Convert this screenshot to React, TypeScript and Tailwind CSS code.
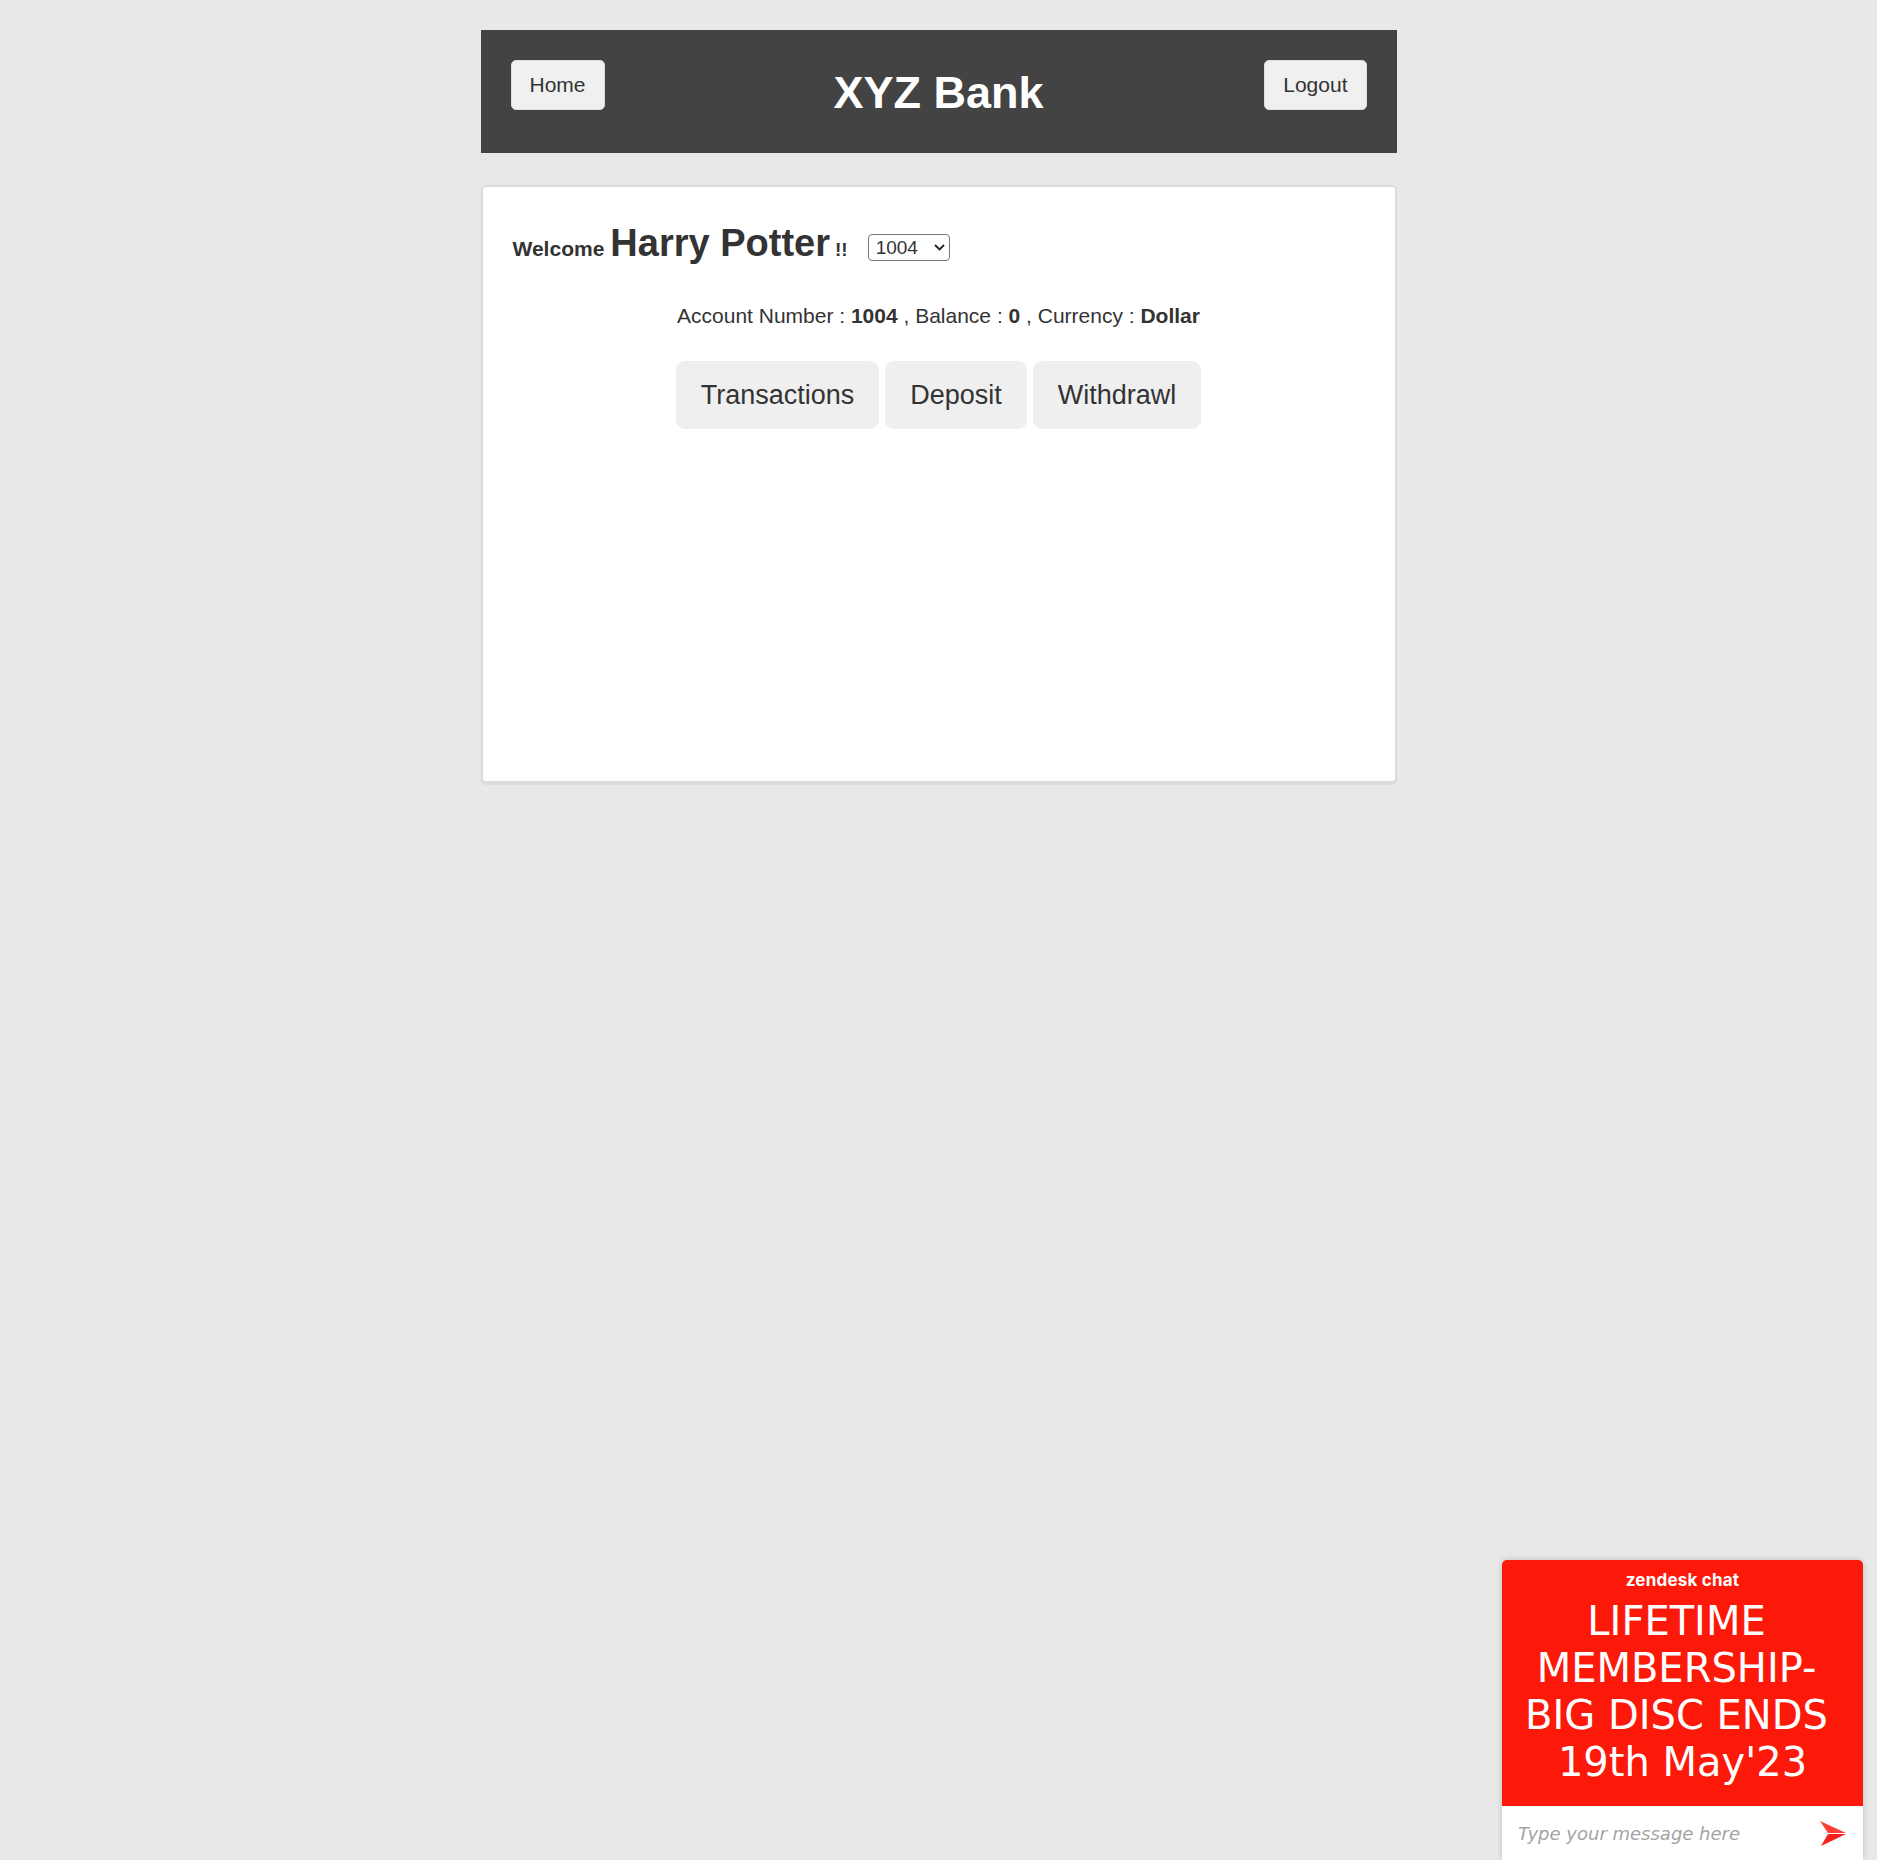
import { useState } from "react";

interface ChatWidgetProps {
  message: string;
  setMessage: (value: string) => void;
}

const accounts = ["1004", "1005", "1006"];

function SendIcon() {
  return (
    <svg width="27" height="25" viewBox="0 0 27 25" className="shrink-0">
      <path d="M0 0 L26 12 L8 12 Z" fill="#ff3d33" />
      <path d="M1 25 L26 13 L8 13 Z" fill="#f5211a" />
    </svg>
  );
}

function ChatWidget({ message, setMessage }: ChatWidgetProps) {
  return (
    <div className="absolute bottom-0 right-[14px] w-[361px] rounded-t-[5px] overflow-hidden shadow-[0_0_6px_rgba(0,0,0,0.18)]">
      <div className="bg-[#fc1909] h-[246px] flex flex-col items-center pt-[9px]">
        <div className="font-['Inter',sans-serif] font-bold text-white text-[17px] leading-[22px] tracking-[0.2px]">
          zendesk chat
        </div>
        <div className="mt-[7px] font-['DejaVu_Sans',sans-serif] text-white text-[40px] leading-[47px] text-center">
          <div className="pr-[12px]">LIFETIME</div>
          <div className="pr-[12px]">MEMBERSHIP-</div>
          <div className="pr-[12px]">BIG DISC ENDS</div>
          <div>19th May'23</div>
        </div>
      </div>
      <div className="bg-white h-[54px] flex items-center pl-[16px] pr-[16px] gap-2">
        <input
          value={message}
          onChange={(e) => setMessage(e.target.value)}
          placeholder="Type your message here"
          className="flex-1 min-w-0 outline-none font-['DejaVu_Sans',sans-serif] italic text-[18px] text-[#555] placeholder:text-[#a3a3a3]"
        />
        <SendIcon />
      </div>
    </div>
  );
}

export default function App() {
  const [account, setAccount] = useState("1004");
  const [message, setMessage] = useState("");

  return (
    <div className="relative min-h-[1860px] bg-[#e8e8e8] font-['Liberation_Sans',Arial,sans-serif] text-[#333] overflow-hidden">
      <div className="w-[916px] mx-auto pt-[30px]">
        {/* Top bar */}
        <div className="bg-[#434343] h-[123px] grid grid-cols-[1fr_auto_1fr] items-start px-[30px] pt-[30px]">
          <div>
            <button className="bg-[#f0f0f0] text-[#333] text-[21px] leading-[30px] px-[18px] py-[9px] rounded-[5px] border border-[#ddd]">
              Home
            </button>
          </div>
          <strong className="text-white text-[45px] leading-[50px] mt-[8px] font-bold">
            XYZ Bank
          </strong>
          <div className="flex justify-end">
            <button className="bg-[#f0f0f0] text-[#333] text-[21px] leading-[30px] px-[18px] py-[9px] rounded-[5px] border border-[#ddd]">
              Logout
            </button>
          </div>
        </div>

        {/* Account panel */}
        <div className="mt-[32px] bg-white h-[598px] border-2 border-[#dcdcdc] rounded-[5px] shadow-[0_2px_1px_rgba(0,0,0,0.06)] px-[30px] pt-[34px]">
          <div className="flex items-baseline">
            <strong className="text-[21px]">Welcome</strong>
            <span className="ml-[6px] text-[38px] font-bold leading-[44px]">
              Harry Potter
            </span>
            <strong className="ml-[5px] text-[19px]">!!</strong>
            <div className="relative ml-[20px] self-center mt-[8px]">
              <select
                value={account}
                onChange={(e) => setAccount(e.target.value)}
                className="appearance-none h-[27px] w-[82px] pl-[7px] border border-[#767676] rounded-[4px] bg-white text-[19px] leading-[25px] text-[#333] outline-none"
              >
                {accounts.map((a) => (
                  <option key={a} value={a}>
                    {a}
                  </option>
                ))}
              </select>
              <svg
                className="pointer-events-none absolute right-[5px] top-[10px]"
                width="11"
                height="7"
                viewBox="0 0 11 7"
                fill="none"
              >
                <path
                  d="M1 1l4.5 4.5L10 1"
                  stroke="#222"
                  strokeWidth="1.8"
                />
              </svg>
            </div>
          </div>

          <div className="text-center text-[21px] leading-[30px] mt-[36px]">
            Account Number : <strong>{account}</strong> , Balance :{" "}
            <strong>0</strong> , Currency : <strong>Dollar</strong>
          </div>

          <div className="flex justify-center gap-[6px] mt-[30px]">
            {["Transactions", "Deposit", "Withdrawl"].map((label) => (
              <button
                key={label}
                className="bg-[#efefef] text-[#333] text-[27px] leading-[36px] px-[24px] py-[15px] rounded-[9px] border border-[#efefef]"
              >
                {label}
              </button>
            ))}
          </div>
        </div>
      </div>

      <ChatWidget message={message} setMessage={setMessage} />
    </div>
  );
}
